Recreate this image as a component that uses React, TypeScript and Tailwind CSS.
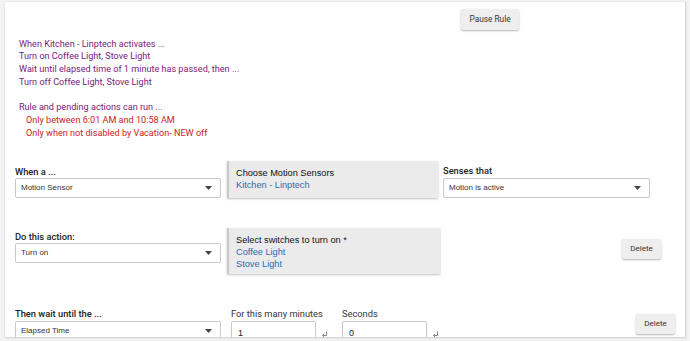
import React from "react";

const purple = "text-[#7b1a7b]";

function Caret() {
  return (
    <svg width="7" height="4" viewBox="0 0 7 4" className="shrink-0">
      <path d="M0 0 L7 0 L3.5 4 Z" fill="#444" />
    </svg>
  );
}

function Select({ value, width }: { value: string; width: string }) {
  return (
    <div
      className={`${width} h-[20px] flex items-center justify-between border border-[#c8c8c8] rounded-[2px] bg-white pl-[5px] pr-[8px] font-['Liberation_Sans',Arial,sans-serif] text-[8px] text-[#333]`}
    >
      <span>{value}</span>
      <Caret />
    </div>
  );
}

function Label({ children }: { children: React.ReactNode }) {
  return (
    <div className="h-[11px] whitespace-nowrap font-['Roboto',sans-serif] text-[9.3px] font-medium leading-[11px] text-[#222]">
      {children}
    </div>
  );
}

function GrayBox({ title, items, width, height }: { title: string; items: string[]; width: string; height: string }) {
  return (
    <div
      className={`${width} ${height} bg-[#ebebeb] border-l-2 border-[#c9c9c9] shadow-[0_1px_2px_rgba(0,0,0,0.25)] pl-[7px] pt-[6px] font-['Liberation_Sans',Arial,sans-serif] text-[9.2px] leading-[12px]`}
    >
      <div className="text-[#111]">{title}</div>
      {items.map((i) => (
        <div key={i} className="text-[#2a6bb0]">
          {i}
        </div>
      ))}
    </div>
  );
}

function SmallButton({ label }: { label: string }) {
  return (
    <div className="w-[39px] h-[20px] flex items-center justify-center bg-[#eeeeee] rounded-[2px] shadow-[0_1px_2px_rgba(0,0,0,0.3)] font-['Roboto',sans-serif] text-[8px] text-[#333]">
      {label}
    </div>
  );
}

function EnterIcon() {
  return (
    <svg width="7" height="7" viewBox="0 0 7 7" className="shrink-0 mt-[10px]">
      <path d="M5.5 0.5 V4.5 H1.5 M3 3 L1.5 4.5 L3 6" fill="none" stroke="#777" strokeWidth="0.9" />
    </svg>
  );
}

function NumberInput({ value }: { value: string }) {
  return (
    <div className="w-[85px] h-[22px] border border-[#c8c8c8] rounded-[2px] bg-white pl-[6px] pt-[6px] font-['Liberation_Sans',Arial,sans-serif] text-[9px] leading-[10px] text-[#222]">
      {value}
    </div>
  );
}

export default function App() {
  return (
    <div className="w-[690px] h-[341px] overflow-hidden bg-[#f3f3f3] pt-[2px] pl-[5px]">
      <div className="w-[681px] h-[336px] overflow-hidden bg-white border-r border-b border-[#d6d6d6] shadow-[0_0_2px_rgba(0,0,0,0.12)]">
        <div className="flex pt-[7px] pl-[456px]">
          <div className="w-[58px] h-[21px] flex items-center justify-center bg-[#eeeeee] rounded-[2px] shadow-[0_1px_2px_rgba(0,0,0,0.3)] font-['Roboto',sans-serif] text-[8.3px] text-[#333]">
            Pause Rule
          </div>
        </div>

        <div className={`mt-[7.6px] ml-[14px] font-['Roboto',sans-serif] text-[9.1px] leading-[12.7px] ${purple}`}>
          <div>When Kitchen - Linptech activates ...</div>
          <div>Turn on Coffee Light, Stove Light</div>
          <div>Wait until elapsed time of 1 minute has passed, then ...</div>
          <div>Turn off Coffee Light, Stove Light</div>
          <div className="h-[12.7px]" />
          <div>Rule and pending actions can run ...</div>
          <div className="pl-[7px] text-[#cc2222]">Only between 6:01 AM and 10:58 AM</div>
          <div className="pl-[7px] text-[#cc2222]">Only when not disabled by Vacation- NEW off</div>
        </div>

        <div className="flex items-start mt-[21.4px] ml-[10px]">
          <div className="mt-[5px] flex flex-col gap-[1px]">
            <Label>When a ...</Label>
            <Select value="Motion Sensor" width="w-[206px]" />
          </div>
          <div className="ml-[6px]">
            <GrayBox title="Choose Motion Sensors" items={["Kitchen - Linptech"]} width="w-[211px]" height="h-[37px]" />
          </div>
          <div className="ml-[5px] mt-[4px] flex flex-col gap-[2px]">
            <Label>Senses that</Label>
            <Select value="Motion is active" width="w-[207px]" />
          </div>
        </div>

        <div className="flex items-start mt-[30px] ml-[10px]">
          <div className="mt-[3px] flex flex-col gap-[1px]">
            <Label>Do this action:</Label>
            <Select value="Turn on" width="w-[206px]" />
          </div>
          <div className="ml-[6px]">
            <GrayBox
              title="Select switches to turn on *"
              items={["Coffee Light", "Stove Light"]}
              width="w-[213px]"
              height="h-[46px]"
            />
          </div>
          <div className="mt-[11px] ml-[182px]">
            <SmallButton label="Delete" />
          </div>
        </div>

        <div className="flex items-start mt-[34px] ml-[10px]">
          <div className="flex flex-col gap-[2px]">
            <Label>Then wait until the ...</Label>
            <Select value="Elapsed Time" width="w-[206px]" />
          </div>
          <div className="ml-[10px] flex flex-col gap-[2px]">
            <div className="h-[11px] whitespace-nowrap font-['Roboto',sans-serif] text-[9.3px] leading-[11px] text-[#333]">
              For this many minutes
            </div>
            <div className="flex items-start gap-[5px]">
              <NumberInput value="1" />
              <EnterIcon />
            </div>
          </div>
          <div className="ml-[14px] flex flex-col gap-[2px]">
            <div className="h-[11px] whitespace-nowrap font-['Roboto',sans-serif] text-[9.3px] leading-[11px] text-[#333]">
              Seconds
            </div>
            <div className="flex items-start gap-[5px]">
              <NumberInput value="0" />
              <EnterIcon />
            </div>
          </div>
          <div className="mt-[6px] ml-[197px]">
            <SmallButton label="Delete" />
          </div>
        </div>
      </div>
    </div>
  );
}
